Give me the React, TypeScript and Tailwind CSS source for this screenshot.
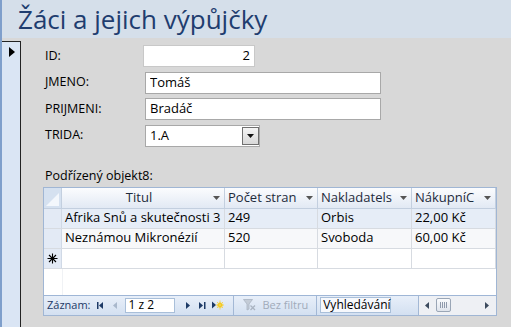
import React from 'react';

const font = { fontFamily: '"Open Sans", "Noto Sans", sans-serif' };

function DownArrow({ color = '#444' }: { color?: string }) {
  return (
    <svg width="7" height="4" viewBox="0 0 7 4" className="shrink-0">
      <path d="M0 0H7L3.5 4Z" fill={color} />
    </svg>
  );
}

function Field({ label, value, width, right, combo, first }: { label: string; value: string; width: string; right?: boolean; combo?: boolean; first?: boolean }) {
  return (
    <div className="flex items-center h-[22px]">
      <div className="w-[98px] text-[12.5px] text-black">{label}</div>
      <div
        className={`${width} h-[22px] bg-white flex items-center ${first ? 'border border-[#c8c8c8]' : 'ml-[2px] border border-[#a8a8a8]'} ${right ? 'justify-end pr-[4px]' : 'pl-[4px]'} text-[13px] text-black`}
      >
        <span className="flex-1 truncate" style={{ textAlign: right ? 'right' : 'left' }}>{value}</span>
        {combo && (
          <div className="w-[17px] h-[18px] border border-[#707070] bg-gradient-to-b from-[#f4f4f4] to-[#d8d8d8] flex items-center justify-center">
            <DownArrow color="#111" />
          </div>
        )}
      </div>
    </div>
  );
}

const cols = [
  { title: 'Titul', w: 'w-[163px]', center: true },
  { title: 'Počet stran', w: 'w-[93px]' },
  { title: 'Nakladatels', w: 'w-[94px]' },
  { title: 'NákupníC', w: 'w-[84px]' },
];

const rows = [
  { bg: 'bg-[#e6edf7]', cells: ['Afrika Snů a skutečnosti 3', '249', 'Orbis', '22,00 Kč'] },
  { bg: 'bg-[#f7f8fa]', cells: ['Neznámou Mikronézií', '520', 'Svoboda', '60,00 Kč'] },
];

function NavBar() {
  return (
    <div className="h-[20px] flex items-stretch border-t border-[#9fb6d6] text-[11px]">
      <div className="flex items-center bg-gradient-to-b from-[#e8eff9] to-[#d3e0f1] pl-[3px] w-[374px]">
        <span className="text-[#1d3a66]">Záznam:</span>
        <svg width="7" height="7" viewBox="0 0 7 7" className="ml-[6px]">
          <rect x="0" y="0" width="1.5" height="7" fill="#1d3a66" />
          <path d="M6 0V7L2 3.5Z" fill="#1d3a66" />
        </svg>
        <svg width="5" height="7" viewBox="0 0 5 7" className="ml-[9px]">
          <path d="M4 0V7L0 3.5Z" fill="#a9b8cc" />
        </svg>
        <div className="ml-[7px] w-[50px] h-[15px] bg-white border border-[#a9bfd9] flex items-center pl-[3px] text-[12px] text-black">1 z 2</div>
        <svg width="5" height="7" viewBox="0 0 5 7" className="ml-[11px]">
          <path d="M0 0V7L4 3.5Z" fill="#1d3a66" />
        </svg>
        <svg width="7" height="7" viewBox="0 0 7 7" className="ml-[8px]">
          <path d="M0 0V7L4 3.5Z" fill="#1d3a66" />
          <rect x="5" y="0" width="1.5" height="7" fill="#1d3a66" />
        </svg>
        <svg width="12" height="10" viewBox="0 0 12 10" className="ml-[6px]">
          <path d="M0 1.5V8.5L4 5Z" fill="#1d3a66" />
          <circle cx="8" cy="5" r="2.6" fill="#f2c200" />
          <path d="M8 0.5V9.5M3.8 5H12M5 2L11 8M11 2L5 8" stroke="#f5d44a" strokeWidth="0.9" />
        </svg>
        <div className="ml-[9px] w-px self-stretch bg-[#a3b8d5]" />
        <svg width="13" height="12" viewBox="0 0 13 12" className="ml-[9px]">
          <path d="M0.5 0.5H9.5L6 5V10L4 11V5Z" fill="#c4ccd7" stroke="#aab4c2" strokeWidth="0.8" />
          <path d="M7.5 6.5L12 11M12 6.5L7.5 11" stroke="#aab4c2" strokeWidth="1.3" />
        </svg>
        <span className="ml-[7px] text-[#a1abba]">Bez filtru</span>
        <div className="ml-[8px] w-px self-stretch bg-[#a3b8d5]" />
        <div className="ml-[3px] w-[71px] h-[16px] bg-[#f6f8fc] border border-[#a9bfd9] flex items-center pl-[2px] text-[12px] text-black whitespace-nowrap">Vyhledávání</div>
      </div>
      <div className="w-px bg-[#a3b8d5]" />
      <div className="flex-1 flex items-center bg-[#eef0f4] pl-[6px]">
        <svg width="4" height="7" viewBox="0 0 4 7">
          <path d="M4 0V7L0 3.5Z" fill="#3d4b5e" />
        </svg>
        <div className="ml-[7px] w-[15px] h-[14px] rounded-[2px] border border-[#9aa6b6] bg-gradient-to-b from-[#fafbfd] to-[#dfe4ec] flex items-center justify-center gap-[1px]">
          <div className="w-px h-[6px] bg-[#8f9aab]" />
          <div className="w-px h-[6px] bg-[#8f9aab]" />
          <div className="w-px h-[6px] bg-[#8f9aab]" />
          <div className="w-px h-[6px] bg-[#8f9aab]" />
        </div>
        <div className="flex-1" />
        <svg width="4" height="7" viewBox="0 0 4 7" className="mr-[7px]">
          <path d="M0 0V7L4 3.5Z" fill="#3d4b5e" />
        </svg>
      </div>
    </div>
  );
}

export default function App() {
  return (
    <div className="w-[511px] h-[327px] bg-[#d8d8d8] flex flex-col overflow-hidden" style={font}>
      <div className="h-[38px] shrink-0 bg-[#d5dfea] border-l-2 border-[#7f9fcb] pl-[16px] flex items-center">
        <h1 className="text-[26px] leading-none text-[#1f3d6f] whitespace-nowrap">Žáci a jejich výpůjčky</h1>
      </div>
      <div className="flex flex-1 min-h-0">
        <div className="w-[21px] shrink-0 flex border-l-2 border-[#7f9fcb] pt-[3px] bg-[#d8d8d8]">
          <div className="flex-1 bg-[#dae5f4] border-t border-r border-[#222] pt-[5px] pl-[7px]">
            <svg width="6" height="10" viewBox="0 0 6 10">
              <path d="M0 0V10L6 5Z" fill="#000" />
            </svg>
          </div>
        </div>
        <div className="flex-1 pl-[24px] pt-[7px] flex flex-col">
          <div className="flex flex-col gap-[4.5px]">
            <Field label="ID:" value="2" width="w-[112px]" right first />
            <Field label="JMENO:" value="Tomáš" width="w-[236px]" />
            <Field label="PRIJMENI:" value="Bradáč" width="w-[236px]" />
            <Field label="TRIDA:" value="1.A" width="w-[115px]" combo />
          </div>
          <div className="mt-[21px] text-[12.5px] leading-[16px] text-black">Podřízený objekt8:</div>
          <div className="mt-[3px] -ml-[2px] w-[454px] h-[129px] border border-[#a0b6d4] bg-white flex flex-col text-[13px]">
            <div className="flex h-[21px] border-b border-[#c3cfdf] bg-gradient-to-b from-[#fbfcfe] to-[#e2e9f4]">
              <div className="w-[19px] bg-[#d5e1f0] border-r border-[#c3cfdf] flex items-end justify-end p-[2px]">
                <svg width="13" height="13" viewBox="0 0 13 13">
                  <path d="M13 0V13H0Z" fill="#f3f7fc" />
                </svg>
              </div>
              {cols.map((c) => (
                <div key={c.title} className={`${c.w} shrink-0 border-r border-[#c3cfdf] flex items-center pl-[3px] pr-[4px] overflow-hidden`}>
                  <span className={`flex-1 whitespace-nowrap overflow-hidden text-[#1e2b3c] ${c.center ? 'text-center' : ''}`}>{c.title}</span>
                  <DownArrow color="#555" />
                </div>
              ))}
            </div>
            {rows.map((r, i) => (
              <div key={i} className={`flex h-[20px] border-b border-[#d7dbe1] ${r.bg}`}>
                <div className="w-[19px] bg-[#e3eaf5] border-r border-[#d0d9e6]" />
                {cols.map((c, j) => (
                  <div key={j} className={`${c.w} shrink-0 border-r border-[#d7dbe1] flex items-center pl-[3px] overflow-hidden whitespace-nowrap text-black`}>
                    {r.cells[j]}
                  </div>
                ))}
              </div>
            ))}
            <div className="flex h-[20px] border-b border-[#d7dbe1]">
              <div className="w-[19px] bg-[#e3eaf5] border-r border-[#d0d9e6] flex items-center justify-center">
                <svg width="11" height="11" viewBox="0 0 11 11">
                  <path d="M5.5 0.5V10.5M0.5 5.5H10.5M2 2L9 9M9 2L2 9" stroke="#000" strokeWidth="1.1" />
                </svg>
              </div>
              {cols.map((c, j) => (
                <div key={j} className={`${c.w} shrink-0 border-r border-[#d7dbe1]`} />
              ))}
            </div>
            <div className="flex-1 flex">
              <div className="w-[19px] border-r border-[#f0f2f5]" />
            </div>
            <NavBar />
          </div>
        </div>
      </div>
    </div>
  );
}
